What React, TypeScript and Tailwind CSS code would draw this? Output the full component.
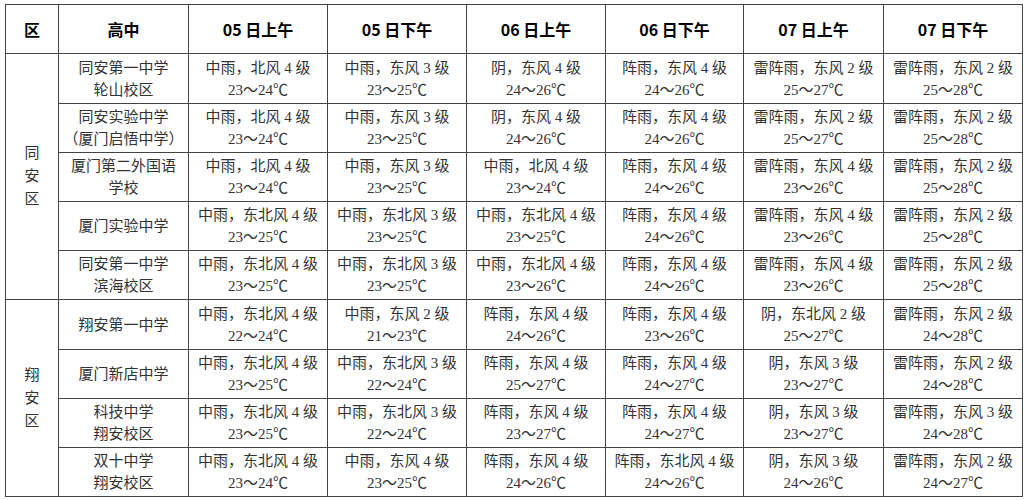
import React from 'react';

type Cell = [string, string];

const heads = ['05 日上午', '05 日下午', '06 日上午', '06 日下午', '07 日上午', '07 日下午'];

const groups: { district: string[]; rows: { school: string[]; cells: Cell[] }[] }[] = [
    {
        district: ['同', '安', '区'],
        rows: [
            {
                school: ['同安第一中学', '轮山校区'],
                cells: [
                    ['中雨，北风 4 级', '23～24℃'],
                    ['中雨，东风 3 级', '23～25℃'],
                    ['阴，东风 4 级', '24～26℃'],
                    ['阵雨，东风 4 级', '24～26℃'],
                    ['雷阵雨，东风 2 级', '25～27℃'],
                    ['雷阵雨，东风 2 级', '25～28℃'],
                ],
            },
            {
                school: ['同安实验中学', '（厦门启悟中学）'],
                cells: [
                    ['中雨，北风 4 级', '23～24℃'],
                    ['中雨，东风 3 级', '23～25℃'],
                    ['阴，东风 4 级', '24～26℃'],
                    ['阵雨，东风 4 级', '24～26℃'],
                    ['雷阵雨，东风 2 级', '25～27℃'],
                    ['雷阵雨，东风 2 级', '25～28℃'],
                ],
            },
            {
                school: ['厦门第二外国语', '学校'],
                cells: [
                    ['中雨，北风 4 级', '23～24℃'],
                    ['中雨，东风 3 级', '23～25℃'],
                    ['中雨，北风 4 级', '23～24℃'],
                    ['阵雨，东风 4 级', '24～26℃'],
                    ['雷阵雨，东风 4 级', '23～26℃'],
                    ['雷阵雨，东风 2 级', '25～28℃'],
                ],
            },
            {
                school: ['厦门实验中学'],
                cells: [
                    ['中雨，东北风 4 级', '23～25℃'],
                    ['中雨，东北风 3 级', '23～25℃'],
                    ['中雨，东北风 4 级', '23～25℃'],
                    ['阵雨，东风 4 级', '24～26℃'],
                    ['雷阵雨，东风 4 级', '23～26℃'],
                    ['雷阵雨，东风 2 级', '25～28℃'],
                ],
            },
            {
                school: ['同安第一中学', '滨海校区'],
                cells: [
                    ['中雨，东北风 4 级', '23～25℃'],
                    ['中雨，东北风 3 级', '23～25℃'],
                    ['中雨，东北风 4 级', '23～26℃'],
                    ['阵雨，东风 4 级', '24～26℃'],
                    ['雷阵雨，东风 4 级', '23～26℃'],
                    ['雷阵雨，东风 2 级', '25～28℃'],
                ],
            },
        ],
    },
    {
        district: ['翔', '安', '区'],
        rows: [
            {
                school: ['翔安第一中学'],
                cells: [
                    ['中雨，东北风 4 级', '22～24℃'],
                    ['中雨，东风 2 级', '21～23℃'],
                    ['阵雨，东风 4 级', '24～26℃'],
                    ['阵雨，东风 4 级', '23～26℃'],
                    ['阴，东北风 2 级', '25～27℃'],
                    ['雷阵雨，东风 2 级', '24～28℃'],
                ],
            },
            {
                school: ['厦门新店中学'],
                cells: [
                    ['中雨，东北风 4 级', '23～25℃'],
                    ['中雨，东北风 3 级', '22～24℃'],
                    ['阵雨，东风 4 级', '25～27℃'],
                    ['阵雨，东风 4 级', '24～27℃'],
                    ['阴，东风 3 级', '23～27℃'],
                    ['雷阵雨，东风 2 级', '24～28℃'],
                ],
            },
            {
                school: ['科技中学', '翔安校区'],
                cells: [
                    ['中雨，东北风 4 级', '23～25℃'],
                    ['中雨，东北风 3 级', '22～24℃'],
                    ['阵雨，东风 4 级', '23～27℃'],
                    ['阵雨，东风 4 级', '24～27℃'],
                    ['阴，东风 3 级', '23～27℃'],
                    ['雷阵雨，东风 3 级', '24～28℃'],
                ],
            },
            {
                school: ['双十中学', '翔安校区'],
                cells: [
                    ['中雨，东北风 4 级', '23～24℃'],
                    ['中雨，东风 4 级', '23～25℃'],
                    ['阵雨，东风 4 级', '24～26℃'],
                    ['阵雨，东北风 4 级', '24～26℃'],
                    ['阴，东风 3 级', '24～26℃'],
                    ['雷阵雨，东风 2 级', '24～27℃'],
                ],
            },
        ],
    },
];

const rowHeights = ['h-[50px]', 'h-[49px]', 'h-[49px]', 'h-[49px]', 'h-[49px]'];

export default function App() {
    return (
        <div className="w-[1025px] h-[500px] bg-white pt-[4px] pl-[5px] overflow-hidden">
            <table className="border-collapse table-fixed w-[1017px] border border-[#444] text-[15px] leading-[22px] text-[#333] font-['Liberation_Serif','Noto_Sans_CJK_SC',serif]">
                <colgroup>
                    <col className="w-[53px]" />
                    <col className="w-[130px]" />
                    <col className="w-[139px]" />
                    <col className="w-[139px]" />
                    <col className="w-[139px]" />
                    <col className="w-[138px]" />
                    <col className="w-[140px]" />
                    <col className="w-[139px]" />
                </colgroup>
                <thead>
                    <tr className="h-[49px] font-['Noto_Sans_CJK_SC',sans-serif] font-bold text-[16px] text-black">
                        <th className="border border-[#444] p-0 text-center">区</th>
                        <th className="border border-[#444] p-0 text-center">高中</th>
                        {heads.map((h) => (
                            <th key={h} className="border border-[#444] p-0 text-center">{h}</th>
                        ))}
                    </tr>
                </thead>
                <tbody>
                    {groups.map((g) =>
                        g.rows.map((r, i) => (
                            <tr key={g.district[0] + i} className={rowHeights[i]}>
                                {i === 0 && (
                                    <td rowSpan={g.rows.length} className="border border-[#444] p-0 text-center align-middle">
                                        <div className="flex flex-col items-center leading-[23px]">
                                            {g.district.map((c, k) => (
                                                <span key={k}>{c}</span>
                                            ))}
                                        </div>
                                    </td>
                                )}
                                <td className="border border-[#444] p-0 text-center align-middle">
                                    {r.school.map((s, k) => (
                                        <div key={k} className="whitespace-nowrap">{s}</div>
                                    ))}
                                </td>
                                {r.cells.map((c, k) => (
                                    <td key={k} className="border border-[#444] p-0 text-center align-middle">
                                        <div className="whitespace-nowrap">{c[0]}</div>
                                        <div className="whitespace-nowrap">{c[1]}</div>
                                    </td>
                                ))}
                            </tr>
                        ))
                    )}
                </tbody>
            </table>
        </div>
    );
}
